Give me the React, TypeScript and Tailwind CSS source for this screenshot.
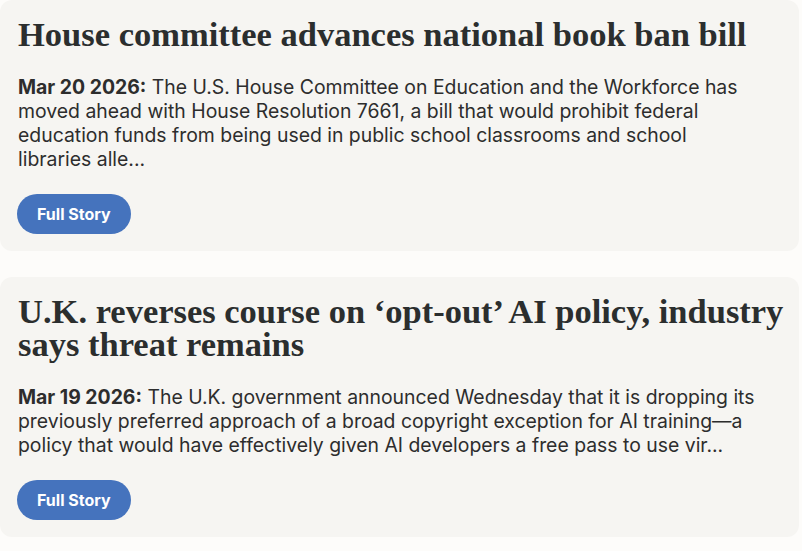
const stories = [
  {
    title: "House committee advances national book ban bill",
    date: "Mar 20 2026:",
    text: "The U.S. House Committee on Education and the Workforce has moved ahead with House Resolution 7661, a bill that would prohibit federal education funds from being used in public school classrooms and school libraries alle...",
  },
  {
    title: "U.K. reverses course on \u2018opt-out\u2019 AI policy, industry says threat remains",
    date: "Mar 19 2026:",
    text: "The U.K. government announced Wednesday that it is dropping its previously preferred approach of a broad copyright exception for AI training\u2014a policy that would have effectively given AI developers a free pass to use vir...",
  },
];

export default function App() {
  return (
    <div className="min-h-[551px] bg-[#fdfcfa] pr-[3px] flex flex-col gap-[26px]">
      {stories.map((s) => (
        <article
          key={s.date}
          className="rounded-[12px] bg-[#f6f5f2] pl-[18px] pr-[6px] pt-[18px] pb-[17px]"
        >
          <h2 className="font-['Liberation_Serif',serif] font-bold text-[34.5px] leading-[33px] text-[#2b2e2e]">
            {s.title}
          </h2>
          <p className="mt-[24px] max-w-[742px] font-['Inter',sans-serif] text-[19.4px] leading-[24px] text-[#2d2d2d]">
            <span className="font-bold">{s.date}</span> {s.text}
          </p>
          <a
            href="#"
            className="mt-[23px] inline-flex h-[40px] items-center rounded-full bg-[#4573bd] px-[20px] font-['Inter',sans-serif] text-[16px] font-bold text-white -ml-px"
          >
            Full Story
          </a>
        </article>
      ))}
    </div>
  );
}
